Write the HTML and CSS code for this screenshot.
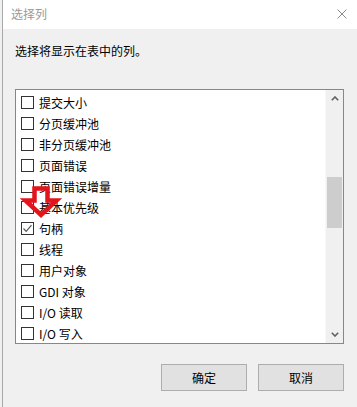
FILE: index.html
```html
<!DOCTYPE html>
<html lang="zh-CN">
<head>
  <meta charset="UTF-8">
  <title>选择列</title>
  <link rel="stylesheet" href="styles.css">
</head>
<body>
  <div class="window">
    <div class="title-bar">
      <span class="title">选择列</span>
      <svg class="close" width="10" height="10" viewBox="0 0 10 10">
        <path d="M0.5 0.5 L9.5 9.5 M9.5 0.5 L0.5 9.5" stroke="#8a8a8a" stroke-width="1" fill="none"/>
      </svg>
    </div>

    <div class="content">
      <div class="desc">选择将显示在表中的列。</div>

      <div class="list-box">
        <div class="items">
          <div class="item"><span class="check"></span>提交大小</div>
          <div class="item"><span class="check"></span>分页缓冲池</div>
          <div class="item"><span class="check"></span>非分页缓冲池</div>
          <div class="item"><span class="check"></span>页面错误</div>
          <div class="item"><span class="check"></span>页面错误增量</div>
          <div class="item"><span class="check"></span>基本优先级</div>
          <div class="item"><span class="check checked">
            <svg width="11" height="11" viewBox="0 0 11 11"><path d="M1.5 5.5 L4.2 8.3 L9.5 2.2" stroke="#555" stroke-width="1.2" fill="none"/></svg>
          </span>句柄</div>
          <div class="item"><span class="check"></span>线程</div>
          <div class="item"><span class="check"></span>用户对象</div>
          <div class="item"><span class="check"></span>GDI 对象</div>
          <div class="item"><span class="check"></span>I/O 读取</div>
          <div class="item"><span class="check"></span>I/O 写入</div>
        </div>
        <div class="scrollbar">
          <div class="sb-arrow">
            <svg width="8" height="5" viewBox="0 0 8 5"><path d="M0.8 4.2 L4 1 L7.2 4.2" stroke="#606060" stroke-width="1.6" fill="none"/></svg>
          </div>
          <div class="sb-track"><div class="sb-thumb"></div></div>
          <div class="sb-arrow">
            <svg width="8" height="5" viewBox="0 0 8 5"><path d="M0.8 0.8 L4 4 L7.2 0.8" stroke="#606060" stroke-width="1.6" fill="none"/></svg>
          </div>
        </div>
      </div>

      <div class="buttons">
        <button class="btn">确定</button>
        <button class="btn">取消</button>
      </div>
    </div>
  </div>

  <!-- red annotation arrow drawn over the list -->
  <svg class="annot" width="70" height="40" viewBox="0 0 70 40">
    <path d="M14.5 2.5 H27.5 V14.5 H36.5 L21 29 L5.5 14.5 H14.5 Z" stroke="#e3141b" stroke-width="4.5" fill="none" stroke-linejoin="miter"/>
  </svg>
</body>
</html>
```

FILE: styles.css
```css
html, body { margin: 0; height: 100%; }
body { background: #f0f0f0; font-family: "Noto Sans CJK SC", "Microsoft YaHei", sans-serif; font-size: 12px; color: #000; }

.window { margin-left: 2px; border-left: 1px solid #a9a9a9; height: 100%; box-sizing: border-box; }

.title-bar { height: 29px; background: #fff; display: flex; align-items: center; justify-content: space-between; padding: 0 10px 2px 8px; box-sizing: border-box; }
.title { color: #9a9a9a; font-size: 12px; }
.close { display: block; }

.content { padding: 14px 13px 0 12px; }
.desc { line-height: 16px; height: 16px; margin-bottom: 30px; padding-left: 0; }

.list-box { height: 255px; border: 1px solid #828790; background: #fff; box-sizing: border-box; display: flex; }
.items { flex: 1; padding: 2px 0 0 5px; }
.item { height: 21px; display: flex; align-items: center; gap: 5px; line-height: 21px; }
.check { width: 13px; height: 13px; box-sizing: border-box; border: 1px solid #333; background: #fff; display: flex; align-items: center; justify-content: center; flex: none; }

.scrollbar { width: 17px; background: #f0f0f0; display: flex; flex-direction: column; border-left: 1px solid #f7f7f7; }
.sb-arrow { height: 17px; display: flex; align-items: center; justify-content: center; }
.sb-track { flex: 1; padding-top: 70px; }
.sb-thumb { height: 51px; margin: 0 1px; background: #cdcdcd; }

.buttons { display: flex; justify-content: flex-end; gap: 11px; margin-top: 20px; }
.btn { width: 86px; height: 27px; background: #e1e1e1; border: 1px solid #adadad; font-family: inherit; font-size: 12px; color: #000; padding: 0; }

.annot { position: absolute; left: 20px; top: 186px; }
```
